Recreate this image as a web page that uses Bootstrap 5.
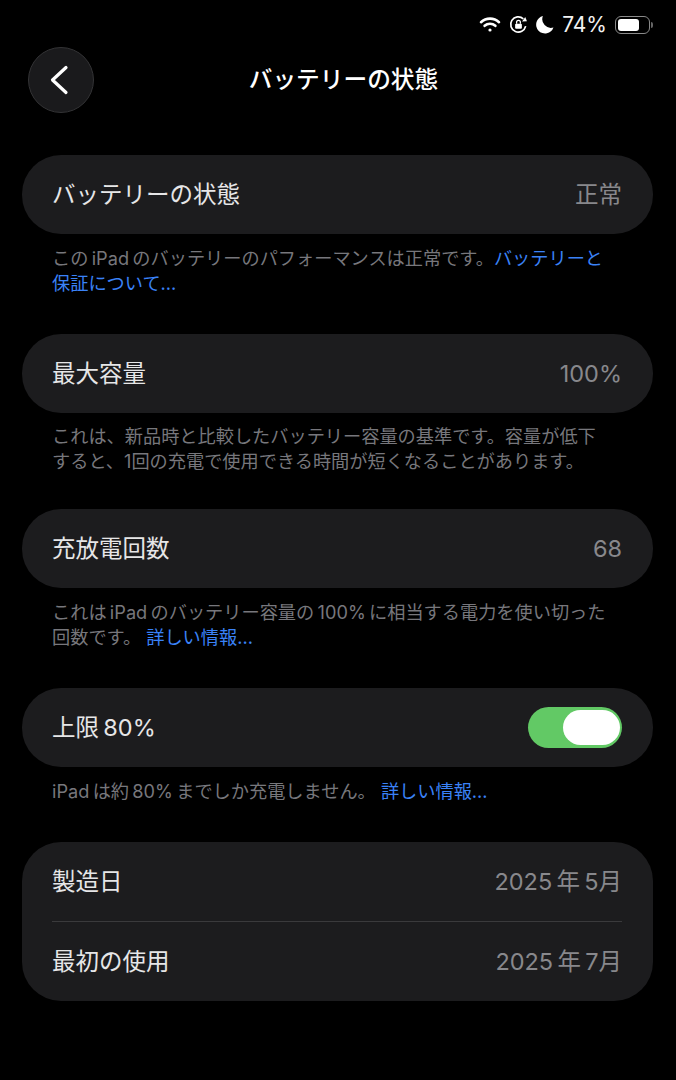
<!DOCTYPE html>
<html lang="ja">
<head>
<meta charset="UTF-8">
<title>バッテリーの状態</title>
<link href="https://cdn.jsdelivr.net/npm/bootstrap@5.3.3/dist/css/bootstrap.min.css" rel="stylesheet">
<style>
body {
    background: #000;
    color: #fff;
    font-family: Inter, "Noto Sans CJK JP", sans-serif;
    width: 676px;
    height: 1080px;
    overflow: hidden;
}
.status-bar {
    height: 47px;
    padding: 2px 23px 0 0;
    font-size: 21px;
    color: #f2f2f2;
}
.batt-body {
    width: 35px;
    height: 18px;
    border: 1.5px solid #8a8a8a;
    border-radius: 6px;
    padding: 2px;
}
.batt-fill {
    width: 74%;
    height: 100%;
    background: #fff;
    border-radius: 3px;
}
.batt-tip {
    width: 2px;
    height: 6px;
    background: #666;
    border-radius: 0 2px 2px 0;
    margin-left: 1px;
}
.top-bar {
    height: 66px;
    padding-left: 28px;
}
.back-btn {
    width: 66px;
    height: 66px;
    border-radius: 50%;
    background: #1a1a1c;
    border: 1px solid #333335;
    padding-right: 4px;
}
.top-title {
    inset: 0;
    padding-left: 11px;
    font-size: 23.7px;
    font-weight: 500;
}
.sheet {
    padding: 42px 23px 0 22px;
}
.set-pill {
    background: #1c1c1e;
    border-radius: 39px;
    padding: 0 31px 0 30px;
    height: 79px;
    font-size: 23.5px;
    color: #e6e6e7;
}
.set-value {
    color: #88888c;
}
.set-note {
    color: #77777c;
    font-size: 18.2px;
    line-height: 25px;
    padding: 12px 0 0 30px;
    margin-bottom: 0;
    white-space: nowrap;
    height: 100px;
}
.set-note.short-gap {
    height: 96px;
    padding-top: 11px;
}
.set-note.one-line {
    height: 75px;
}
.set-note a {
    color: #3a82f7;
    text-decoration: none;
}
.pill-toggle {
    width: 94px;
    height: 41px;
    border-radius: 21px;
    background: #62c965;
    padding: 3px 2px;
}
.pill-knob {
    width: 57px;
    height: 35px;
    border-radius: 18px;
    background: #fff;
}
.date-card {
    background: #1c1c1e;
    border-radius: 39px;
    padding: 0 31px 0 30px;
    font-size: 23.5px;
    color: #e6e6e7;
}
.date-row {
    height: 79px;
}
.date-row + .date-row {
    height: 80px;
    border-top: 1px solid #3a3a3c;
}
</style>
</head>
<body>

<div class="status-bar d-flex justify-content-end align-items-center gap-2">
    <svg width="22" height="17" viewBox="0 0 22 17" fill="none" stroke="#fff" stroke-width="2.6" stroke-linecap="round">
        <path d="M2 6.2a13 13 0 0 1 18 0"/>
        <path d="M5.6 9.8a8 8 0 0 1 10.8 0"/>
        <circle cx="11" cy="14" r="1.6" fill="#fff" stroke="none"/>
    </svg>
    <svg width="19" height="19" viewBox="0 0 18 18" fill="none" stroke="#fff" stroke-width="1.6">
        <path d="M15.8 10.5A7.2 7.2 0 1 1 13.6 3.6"/>
        <path d="M12.4 6.2l4.6-.2-1.6-4.2z" fill="#fff" stroke="none"/>
        <rect x="5.8" y="8.2" width="6.4" height="4.8" rx="1" fill="#fff" stroke="none"/>
        <path d="M7.2 8.2V6.8a1.8 1.8 0 0 1 3.6 0v1.4" stroke-width="1.2"/>
    </svg>
    <svg width="18" height="19" viewBox="0 0 17 18">
        <path d="M6.5 1a8.2 8.2 0 0 0 10 10.8A8.4 8.4 0 1 1 6.5 1z" fill="#fff"/>
    </svg>
    <span>74%</span>
    <span class="d-flex align-items-center">
        <span class="batt-body d-block"><span class="batt-fill d-block"></span></span>
        <span class="batt-tip d-block"></span>
    </span>
</div>

<div class="top-bar position-relative d-flex align-items-center">
    <div class="back-btn d-flex align-items-center justify-content-center">
        <svg width="20" height="30" viewBox="0 0 20 30" fill="none" stroke="#fff" stroke-width="3.2" stroke-linecap="round" stroke-linejoin="round">
            <path d="M17 2.5L3.5 15 17 27.5"/>
        </svg>
    </div>
    <div class="top-title position-absolute d-flex align-items-center justify-content-center">バッテリーの状態</div>
</div>

<div class="sheet">
    <div class="set-pill d-flex align-items-center justify-content-between">
        <span>バッテリーの状態</span>
        <span class="set-value">正常</span>
    </div>
    <p class="set-note">この&thinsp;iPad&thinsp;のバッテリーのパフォーマンスは正常です。<a href="#">バッテリーと<br>保証について...</a></p>

    <div class="set-pill d-flex align-items-center justify-content-between">
        <span>最大容量</span>
        <span class="set-value">100%</span>
    </div>
    <p class="set-note short-gap">これは、新品時と比較したバッテリー容量の基準です。容量が低下<br>すると、1回の充電で使用できる時間が短くなることがあります。</p>

    <div class="set-pill d-flex align-items-center justify-content-between">
        <span>充放電回数</span>
        <span class="set-value">68</span>
    </div>
    <p class="set-note">これは&thinsp;iPad&thinsp;のバッテリー容量の&thinsp;100%&thinsp;に相当する電力を使い切った<br>回数です。 <a href="#">詳しい情報...</a></p>

    <div class="set-pill d-flex align-items-center justify-content-between">
        <span>上限&thinsp;80%</span>
        <div class="pill-toggle d-flex justify-content-end">
            <div class="pill-knob"></div>
        </div>
    </div>
    <p class="set-note one-line">iPad&thinsp;は約&thinsp;80%&thinsp;までしか充電しません。 <a href="#">詳しい情報...</a></p>

    <div class="date-card">
        <div class="date-row d-flex align-items-center justify-content-between">
            <span>製造日</span>
            <span class="set-value">2025&thinsp;年&thinsp;5月</span>
        </div>
        <div class="date-row d-flex align-items-center justify-content-between">
            <span>最初の使用</span>
            <span class="set-value">2025&thinsp;年&thinsp;7月</span>
        </div>
    </div>
</div>

<script src="https://cdn.jsdelivr.net/npm/bootstrap@5.3.3/dist/js/bootstrap.bundle.min.js"></script>
</body>
</html>
